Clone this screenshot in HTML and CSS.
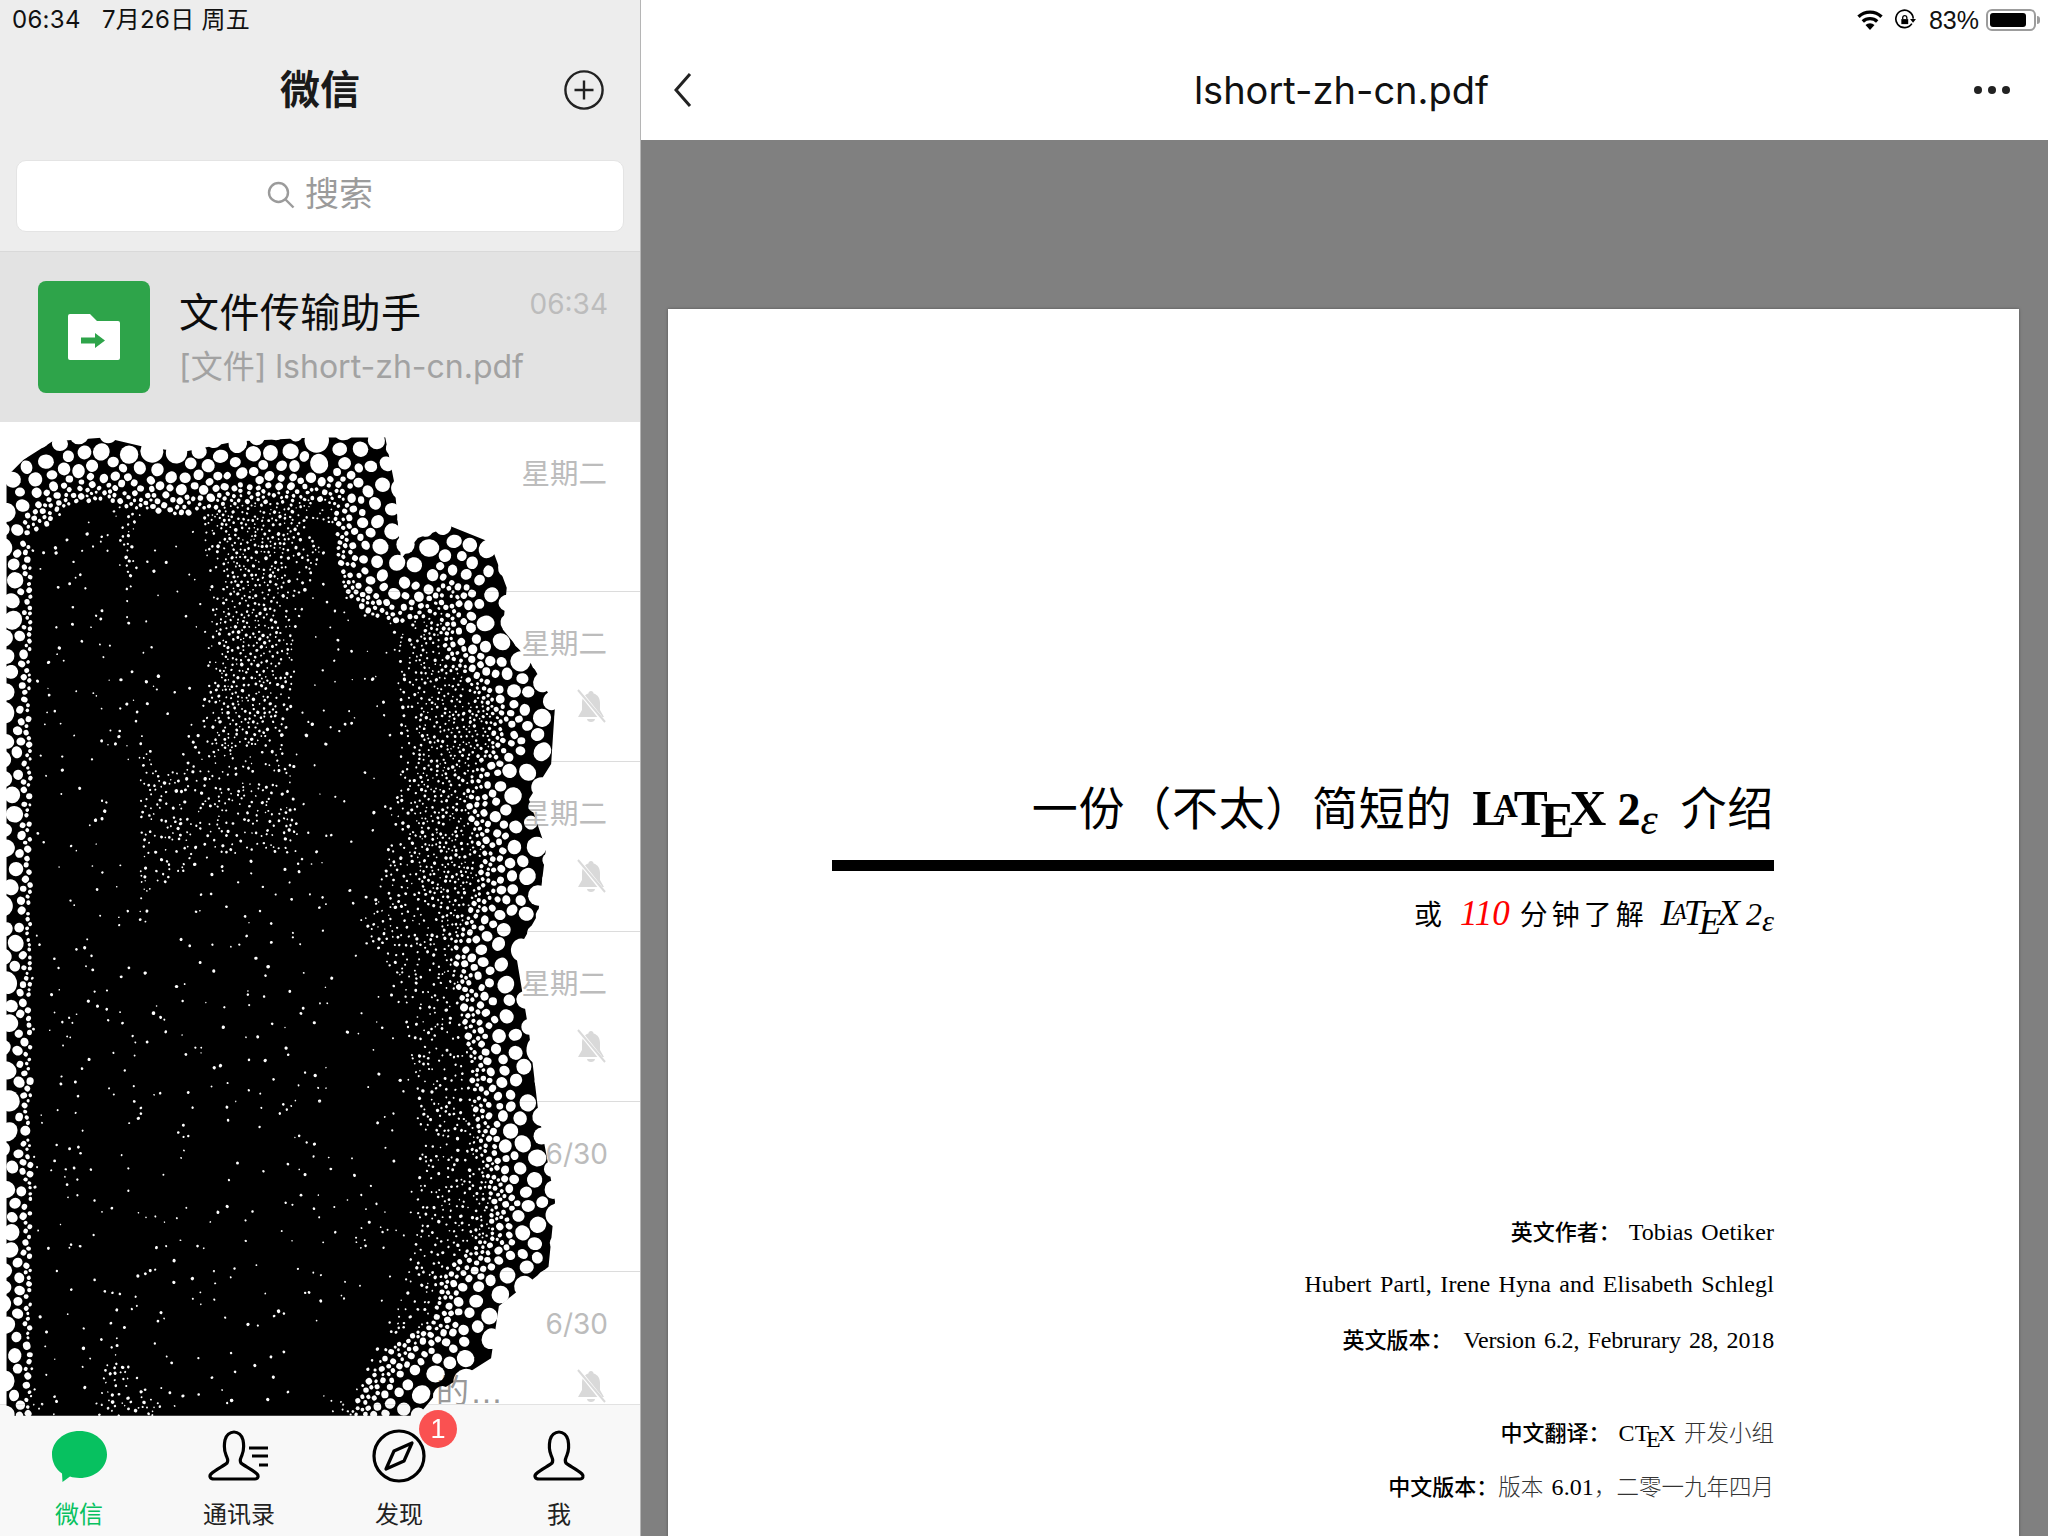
FILE: index.html
```html
<!DOCTYPE html>
<html lang="zh-CN">
<head>
<meta charset="utf-8">
<title>微信</title>
<link rel="stylesheet" href="styles.css">
</head>
<body>
<div class="app">
  <aside class="side">
    <div class="status-left">06:34&nbsp;&nbsp; 7月26日 周五</div>
    <header class="side-nav">
      <h1 class="side-title">微信</h1>
      <svg class="plus" viewBox="0 0 40 40"><circle cx="20" cy="20" r="18.600"/><path d="M20 10.500v19M10.500 20h19"/></svg>
    </header>
    <div class="search">
      <svg class="search-ico" viewBox="0 0 28 28"><circle cx="11.500" cy="11.500" r="9.500"/><path d="M18.500 18.500l8 8"/></svg>
      <span>搜索</span>
    </div>
    <ul class="list">
      <li class="row row-active">
        <div class="avatar">
          <svg viewBox="0 0 52 46" class="folder"><path d="M0 2a2 2 0 0 1 2-2h20l7 7h21a2 2 0 0 1 2 2v35a2 2 0 0 1-2 2H2a2 2 0 0 1-2-2z" fill="#fff"/><path d="M13 23.500h14V19l10 7.500L27 34v-4.500H13z" fill="#2ea44a"/></svg>
        </div>
        <div class="row-body">
          <div class="row-name">文件传输助手</div>
          <div class="row-msg">[文件] lshort-zh-cn.pdf</div>
        </div>
        <div class="row-time row-time-num">06:34</div>
      </li>
      <li class="row"><div class="row-time">星期二</div></li>
      <li class="row"><div class="row-time">星期二</div><svg class="mute" viewBox="0 0 30 34"><path d="M15 2c1.500 0 2.500 1 2.600 2.400C22 5.800 24 9 24 14v7l4 7H2l4-7v-7c0-5 2-8.200 6.400-9.600C12.500 3 13.500 2 15 2zM11 30h8c0 2-2 3-4 3s-4-1-4-3z" fill="#d9d9d9"/><path d="M3 2l25 31" stroke="#fff" stroke-width="4"/><path d="M2 1l27 32" stroke="#d9d9d9" stroke-width="2"/></svg></li>
      <li class="row"><div class="row-time">星期二</div><svg class="mute" viewBox="0 0 30 34"><path d="M15 2c1.500 0 2.500 1 2.600 2.400C22 5.800 24 9 24 14v7l4 7H2l4-7v-7c0-5 2-8.200 6.400-9.600C12.500 3 13.500 2 15 2zM11 30h8c0 2-2 3-4 3s-4-1-4-3z" fill="#d9d9d9"/><path d="M3 2l25 31" stroke="#fff" stroke-width="4"/><path d="M2 1l27 32" stroke="#d9d9d9" stroke-width="2"/></svg></li>
      <li class="row"><div class="row-time">星期二</div><svg class="mute" viewBox="0 0 30 34"><path d="M15 2c1.500 0 2.500 1 2.600 2.400C22 5.800 24 9 24 14v7l4 7H2l4-7v-7c0-5 2-8.200 6.400-9.600C12.500 3 13.500 2 15 2zM11 30h8c0 2-2 3-4 3s-4-1-4-3z" fill="#d9d9d9"/><path d="M3 2l25 31" stroke="#fff" stroke-width="4"/><path d="M2 1l27 32" stroke="#d9d9d9" stroke-width="2"/></svg></li>
      <li class="row"><div class="row-time row-time-num">6/30</div></li>
      <li class="row"><div class="row-time row-time-num">6/30</div><div class="row-tail">的…</div><svg class="mute" viewBox="0 0 30 34"><path d="M15 2c1.500 0 2.500 1 2.600 2.400C22 5.800 24 9 24 14v7l4 7H2l4-7v-7c0-5 2-8.200 6.400-9.600C12.500 3 13.500 2 15 2zM11 30h8c0 2-2 3-4 3s-4-1-4-3z" fill="#d9d9d9"/><path d="M3 2l25 31" stroke="#fff" stroke-width="4"/><path d="M2 1l27 32" stroke="#d9d9d9" stroke-width="2"/></svg></li>
    </ul>
    <canvas id="scribble" class="scribble" width="640" height="1416"></canvas>
    <nav class="tabs">
      <div class="tab tab-on">
        <svg class="tab-ico" viewBox="0 0 62 54"><path d="M31.500 2C47 2 59 12.500 59 25.500S47 49 31.500 49c-3.500 0-6.500-.4-9.500-1.400L14.500 53l-.5-8.500C7.500 40 4 33 4 25.500 4 12.500 16 2 31.500 2z" fill="#07c160"/></svg>
        <span>微信</span>
      </div>
      <div class="tab">
        <svg class="tab-ico line" viewBox="0 0 62 54"><path d="M5 50h42c3 0 4-3 2-5-5-5-13-8-16-11-2-3 0-5 1-8 2-5 2-10 1-15-1-5-5-8-9-8s-8 3-9 8c-1 5-1 10 1 15 1 3 3 5 1 8-3 3-11 6-16 11-2 2-1 5 3 5z"/><path d="M41 19h19M44 27h16M51 36h9"/></svg>
        <span>通讯录</span>
      </div>
      <div class="tab">
        <svg class="tab-ico line" viewBox="0 0 62 54"><circle cx="31" cy="27" r="25"/><path d="M44 14L36 32 18 40l8-18z"/></svg>
        <span>发现</span>
        <b class="badge">1</b>
      </div>
      <div class="tab">
        <svg class="tab-ico line" viewBox="0 0 62 54"><path d="M10 50h42c3 0 4-3 2-5-5-5-13-8-16-11-2-3 0-5 1-8 2-5 2-10 1-15-1-5-5-8-9-8s-8 3-9 8c-1 5-1 10 1 15 1 3 3 5 1 8-3 3-11 6-16 11-2 2-1 5 3 5z"/></svg>
        <span>我</span>
      </div>
    </nav>
  </aside>

  <main class="viewer">
    <div class="status-right">
      <svg class="wifi" viewBox="0 0 28 20"><path d="M14 20l-4.500-5a6.500 6.500 0 0 1 9 0z"/><path d="M6.800 11.500a10.500 10.500 0 0 1 14.400 0M2.500 6.800a16.500 16.500 0 0 1 23 0" fill="none" stroke="#000" stroke-width="3.400"/></svg>
      <svg class="rot" viewBox="0 0 24 24"><path d="M19.500 16A9.500 9.500 0 1 1 21 10.500" fill="none" stroke="#000" stroke-width="1.800"/><path d="M17.500 11h6.500l-3.200 4z"/><path d="M8 11h7.500v5.500H8z"/><path d="M9.500 11V9a2.300 2.300 0 0 1 4.500 0v2" fill="none" stroke="#000" stroke-width="1.400"/></svg>
      <span class="pct">83%</span>
      <div class="battery"><div class="battery-fill"></div></div>
      <div class="battery-nub"></div>
    </div>
    <header class="view-nav">
      <svg class="back" viewBox="0 0 20 36"><path d="M17 2L3 18l14 16"/></svg>
      <h2 class="view-title">lshort-zh-cn.pdf</h2>
      <div class="dots"><i></i><i></i><i></i></div>
    </header>
    <div class="canvas-area">
      <article class="page">
        <div class="doc-title">一份（不太）简短的<span class="tex tex-bold">L<span class="tex-a">A</span>T<span class="tex-e">E</span>X</span><b class="two">2<i class="eps">ε</i></b><span class="title-end">介绍</span></div>
        <div class="doc-rule"></div>
        <div class="doc-sub">或<em class="red">110</em>分钟了解<span class="tex tex-it">L<span class="tex-a">A</span>T<span class="tex-e">E</span>X</span><i class="it2">2<i class="eps">ε</i></i></div>
        <div class="credits">
          <p class="credit"><b>英文作者：</b><span class="gap">Tobias Oetiker</span></p>
          <p class="credit">Hubert Partl, Irene Hyna and Elisabeth Schlegl</p>
          <p class="credit"><b>英文版本：</b><span class="gap gap-wide">Version 6.2, Februrary 28, 2018</span></p>
          <p class="credit credit-break"><b>中文翻译：</b><span class="gap">C<span class="tex">T<span class="tex-e">E</span>X</span> <span class="cn">开发小组</span></span></p>
          <p class="credit"><b>中文版本：</b><span class="cn">版本</span> 6.01<span class="cn">，二零一九年四月</span></p>
        </div>
      </article>
    </div>
  </main>
</div>
<script src="scribble.js"></script>
</body>
</html>
```

FILE: styles.css
```css
* { box-sizing: border-box; }
html, body { margin: 0; height: 100%; }
body { font-family: "Liberation Sans", "Noto Sans CJK SC", sans-serif; color: #111; background: #fff; overflow: hidden; }
.app { display: flex; width: 2048px; height: 1536px; overflow: hidden; }

/* left column */
.side { position: relative; width: 641px; height: 1536px; flex: none; background: #ededed; border-right: 1px solid #b5b5b5; display: flex; flex-direction: column; overflow: hidden; }
.status-left { height: 40px; padding-left: 12px; font-family: Inter, "Noto Sans CJK SC", sans-serif; font-size: 24px; line-height: 40px; letter-spacing: .3px; color: #111; }
.side-nav { height: 100px; display: flex; align-items: center; justify-content: center; position: relative; }
.side-title { margin: 0; font-size: 40px; font-weight: 700; line-height: 1; color: #1a1a1a; }
.plus { position: absolute; right: 36px; top: 30px; width: 40px; height: 40px; fill: none; stroke: #222; stroke-width: 2.400; }
.search { margin: 20px 16px 0; height: 72px; background: #fff; border: 1px solid #e4e4e4; border-radius: 10px; display: flex; align-items: center; justify-content: center; gap: 10px; padding-bottom: 2px; color: #9b9b9b; font-size: 34px; line-height: 1; }
.search span { margin-top: -3px; }
.search-ico { width: 28px; height: 28px; fill: none; stroke: #9b9b9b; stroke-width: 2.400; }
.list { list-style: none; margin: 19px 0 0; padding: 0; flex: 1; background: #fff; border-top: 1px solid #d9d9d9; min-height: 0; }
.row { position: relative; height: 170px; display: flex; background: #fff; padding: 0 33px 0 38px; align-items: center; }
.row:after { content: ""; position: absolute; left: 180px; right: 0; bottom: 0; height: 1px; background: #dcdcdc; }
.row-active { background: #e3e3e3; height: 170px; }
.row-active:after { display: none; }
.avatar { width: 112px; height: 112px; flex: none; border-radius: 8px; background: #2ea44a; display: flex; align-items: center; justify-content: center; }
.folder { width: 52px; height: 46px; }
.row-body { margin-left: 29px; flex: 1; }
.row-name { font-size: 40px; line-height: 56px; letter-spacing: .4px; color: #0d0d0d; }
.row-msg { font-family: Inter, "Noto Sans CJK SC", sans-serif; font-size: 32px; line-height: 46px; margin-top: 3px; color: #a2a2a2; white-space: nowrap; }
.row-time { position: absolute; right: 33px; top: 32px; font-size: 28.500px; line-height: 40px; color: #bcbcbc; }
.row-time-num { font-family: Inter, sans-serif; font-size: 28px; top: 32px; right: 32px; }
.row-tail { position: absolute; left: 436px; top: 100px; font-size: 33px; line-height: 40px; color: #999; letter-spacing: 1px; }
.mute { position: absolute; right: 34px; top: 97px; width: 30px; height: 34px; }
.scribble { position: absolute; left: 0; top: 0; z-index: 1; pointer-events: none; filter: blur(.5px); }

.tabs { position: absolute; left: -1px; right: 0; bottom: 0; height: 132px; background: #f8f8f8; border-top: 1px solid #e2e2e2; display: flex; padding-top: 24px; }
.tab { width: 160px; display: flex; flex-direction: column; align-items: center; font-size: 24px; line-height: 30px; color: #222; position: relative; }
.tab-ico { width: 62px; height: 54px; margin-bottom: 17px; }
.tab-on { color: #07c160; }
.line { fill: none; stroke: #000; stroke-width: 3.200; stroke-linejoin: round; }
.badge { position: absolute; left: 100px; top: -19px; z-index: 2; width: 38px; height: 38px; border-radius: 50%; background: #fa5151; color: #fff; font-weight: 400; font-size: 27px; line-height: 38px; text-align: center; }

/* right column */
.viewer { flex: 1; display: flex; flex-direction: column; min-width: 0; height: 1536px; }
.status-right { height: 40px; display: flex; align-items: center; justify-content: flex-end; padding-right: 8px; }
.wifi { width: 28px; height: 20px; margin-right: 10px; }
.rot { width: 22px; height: 22px; margin-right: 13px; }
.pct { font-size: 25px; margin-right: 7px; color: #111; }
.battery { width: 50px; height: 22px; border: 2px solid #9c9c9c; border-radius: 6px; padding: 2px; }
.battery-fill { width: 36px; height: 100%; background: #000; border-radius: 3px; }
.battery-nub { width: 3px; height: 8px; margin-left: 1px; background: #9c9c9c; border-radius: 0 3px 3px 0; }
.view-nav { height: 100px; background: #fff; display: grid; grid-template-columns: 1fr auto 1fr; align-items: center; padding: 0 38px 0 32px; }
.back { width: 20px; height: 36px; fill: none; stroke: #222; stroke-width: 3; }
.view-title { margin: 0; font-family: Inter, sans-serif; font-size: 38px; font-weight: 400; color: #111; }
.dots { display: flex; gap: 6px; justify-self: end; }
.dots i { width: 8px; height: 8px; border-radius: 50%; background: #222; }
.canvas-area { flex: 1; background: #808080; padding: 169px 29px 0 27px; min-height: 0; overflow: hidden; }
.page { height: 1300px; background: #fff; box-shadow: 0 0 3px rgba(0,0,0,.35); padding: 467px 245px 0 164px; font-family: "Liberation Serif", "Noto Sans CJK SC", serif; color: #000; text-align: right; }
.doc-title { height: 60px; font-size: 46px; line-height: 60px; letter-spacing: .7px; white-space: nowrap; }
.doc-title .tex { font-size: 51px; margin-left: 20px; }
.tex { white-space: nowrap; letter-spacing: 0; }
.tex-bold { font-weight: 700; }
.tex-it { font-style: italic; }
.tex-a { font-size: .66em; vertical-align: .24em; margin-left: -.38em; margin-right: -.12em; }
.tex-e { vertical-align: -.24em; margin-left: -.14em; margin-right: -.1em; }
.two { font-weight: 700; letter-spacing: 0; margin-left: 11px; }
.eps { font-size: .95em; vertical-align: -.2em; font-style: italic; font-weight: 400; }
.title-end { margin-left: 23px; }
.doc-rule { height: 11px; margin-top: 24px; background: #000; }
.doc-sub { height: 50px; margin-top: 15px; font-size: 28px; line-height: 50px; letter-spacing: 4px; white-space: nowrap; }
.doc-sub .tex { font-size: 36.500px; letter-spacing: 0; margin-left: 13px; }
.it2 { font-size: 32px; font-style: italic; letter-spacing: 0; margin-left: 6px; }
.red { color: #f00; font-size: 35px; margin: 0 10px 0 14px; letter-spacing: 0; }
.credits { margin-top: 267px; }
.credit { height: 54px; margin: 0; font-size: 24px; line-height: 54px; white-space: nowrap; word-spacing: 2.300px; letter-spacing: .1px; }
.credit b { font-size: 22px; font-weight: 500; letter-spacing: 0; font-family: "Noto Sans CJK SC", sans-serif; }
.cn { font-size: 22.500px; font-weight: 300; color: #333; letter-spacing: 0; }
.credit-break { margin-top: 39px; }
.gap { margin-left: 8px; }
.gap-wide { margin-left: 11px; letter-spacing: -.15px; }
```

FILE: scribble.js
```js
(function () {
  var canvas = document.getElementById('scribble');
  var ctx = canvas.getContext('2d');
  var k = 1.306;
  var pts = [[5,365],[18,352],[40,338],[80,335],[110,342],[140,346],[180,338],[240,335],[295,335],[302,370],[307,428],[320,412],[345,403],[375,415],[388,450],[385,482],[408,510],[425,540],[422,585],[405,612],[418,650],[412,700],[395,730],[405,790],[412,850],[425,920],[420,970],[382,1000],[376,1040],[335,1066],[320,1084],[5,1084]]
    .map(function (p) { return [p[0] * k, p[1] * k]; });
  var seed = 20190726;
  function rnd() {
    seed |= 0; seed = seed + 0x6D2B79F5 | 0;
    var t = Math.imul(seed ^ seed >>> 15, 1 | seed);
    t = t + Math.imul(t ^ t >>> 7, 61 | t) ^ t;
    return ((t ^ t >>> 14) >>> 0) / 4294967296;
  }
  function inside(x, y) {
    var c = false;
    for (var i = 0, j = pts.length - 1; i < pts.length; j = i++) {
      var a = pts[i], b = pts[j];
      if ((a[1] > y) !== (b[1] > y) && x < (b[0] - a[0]) * (y - a[1]) / (b[1] - a[1]) + a[0]) c = !c;
    }
    return c;
  }
  function edgeDist(x, y) {
    var best = 1e9;
    for (var i = 0, j = pts.length - 1; i < pts.length; j = i++) {
      var a = pts[i], b = pts[j];
      var dx = b[0] - a[0], dy = b[1] - a[1];
      if (Math.abs(dy) < 1 && a[1] > 1400) continue;
      var t = Math.max(0, Math.min(1, ((x - a[0]) * dx + (y - a[1]) * dy) / (dx * dx + dy * dy)));
      var d = Math.hypot(x - a[0] - t * dx, y - a[1] - t * dy);
      if (Math.abs(dx) < 1) d *= 2.6; // the straight cut on the left side
      if (d < best) best = d;
    }
    return best;
  }
  // regions where the ink is almost solid
  var solid = [[70, 920, 70, 520], [250, 1150, 170, 300], [345, 730, 55, 190], [170, 620, 40, 150]];
  function solidity(x, y) {
    var best = 9;
    for (var i = 0; i < solid.length; i++) {
      var s = solid[i], u = (x - s[0]) / s[2], v = (y - s[1]) / s[3];
      best = Math.min(best, u * u + v * v);
    }
    return best;
  }
  ctx.beginPath();
  pts.forEach(function (p, i) { i ? ctx.lineTo(p[0], p[1]) : ctx.moveTo(p[0], p[1]); });
  ctx.closePath();
  ctx.fillStyle = '#000';
  ctx.fill();
  ctx.globalCompositeOperation = 'destination-out';
  var grid = {}, size = 34, cells = [];
  function nearby(x, y, fn) {
    var gx = Math.floor(x / size), gy = Math.floor(y / size);
    for (var a = gx - 1; a <= gx + 1; a++) for (var b = gy - 1; b <= gy + 1; b++) {
      var list = grid[a + ':' + b];
      if (!list) continue;
      for (var n = 0; n < list.length; n++) fn(list[n]);
    }
  }
  for (var n = 0; n < 170000; n++) {
    var x = rnd() * 570, y = 425 + rnd() * 991;
    var ins = inside(x, y);
    var d = edgeDist(x, y);
    if (!ins && d > 11) continue;
    var r, edge = true;
    if (ins && d >= 62) {
      var s = solidity(x, y);
      var skip = s < 1 ? 0.993 : s < 1.8 ? 0.92 : 0.7;
      if (rnd() < skip) continue;
      r = 0.9 + rnd() * 0.9;
      edge = false;
    } else {
      r = ins ? Math.max(2, 9.5 - d * 0.14) : 9;
    }
    r *= 0.75 + rnd() * 0.35;
    var gap = r > 4 ? 1.4 : 1.1, ok = true;
    nearby(x, y, function (c) {
      if (Math.hypot(c.x - x, c.y - y) < c.r + r + gap) ok = false;
    });
    if (!ok) continue;
    var cell = { x: x, y: y, r: r, edge: edge };
    var key = Math.floor(x / size) + ':' + Math.floor(y / size);
    (grid[key] = grid[key] || []).push(cell);
    cells.push(cell);
  }
  // let the holes near the rim grow until they meet, so only thin threads are left
  for (var pass = 0; pass < 2; pass++) {
    cells.forEach(function (c) {
      if (!c.edge) return;
      var room = c.r * 1.35;
      nearby(c.x, c.y, function (o) {
        if (o !== c) room = Math.min(room, Math.hypot(o.x - c.x, o.y - c.y) - o.r - 1.1);
      });
      if (room > c.r) c.r = room;
    });
  }
  cells.forEach(function (c) {
    ctx.beginPath();
    ctx.ellipse(c.x, c.y, c.r, c.r * (0.85 + rnd() * 0.15), rnd() * 3.14, 0, 6.29);
    ctx.fill();
  });
})();
```
